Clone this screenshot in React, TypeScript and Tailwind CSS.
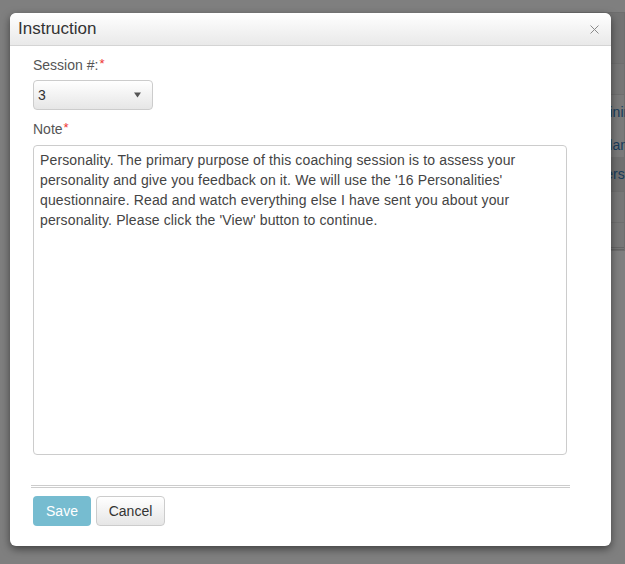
import React from 'react'

const noteText =
  "Personality. The primary purpose of this coaching session is to assess your\npersonality and give you feedback on it. We will use the '16 Personalities'\nquestionnaire. Read and watch everything else I have sent you about your\npersonality. Please click the 'View' button to continue."

function Required() {
  return <sup className="text-[#e33] text-[13px] relative -top-[2px] ml-[1px]">*</sup>
}

// page visible behind the modal backdrop (only the right edge shows)
function BackgroundPage() {
  return (
    <div className="absolute inset-0 bg-white">
      <div className="h-[12px]" />
      <div className="ml-[560px] border border-[#ddd]">
        <div className="h-[51px] bg-[#e6e6e6] border-b border-[#ddd]" />
        <div className="h-[31px] bg-[#ececec] border-b border-[#ddd]" />
        <div className="h-[34px] bg-[#f4f4f4] flex items-center text-[14px] text-[#337ab7]">
          <span className="ml-[28px] whitespace-nowrap">Training</span>
        </div>
        <div className="h-[28px] bg-[#f4f4f4] flex items-end pb-[2px] text-[14px] text-[#337ab7]">
          <span className="ml-[39px] whitespace-nowrap">Plan</span>
        </div>
        <div className="h-[35px] bg-[#e0e0e0] border-b border-[#ddd] flex items-center text-[14px] text-[#337ab7]">
          <span className="ml-[35px] whitespace-nowrap">Personality</span>
        </div>
        <div className="h-[31px] bg-[#eeeeee] border-b border-[#ddd]" />
        <div className="h-[27px] bg-[#eeeeee] border-b-[3px] border-double border-[#ccc]" />
      </div>
    </div>
  )
}

export default function App() {
  return (
    <div
      className="relative h-[564px] w-[625px] overflow-hidden text-[14px] leading-[20px]"
      style={{ fontFamily: '"Liberation Sans", Arial, sans-serif' }}
    >
      <BackgroundPage />
      <div className="absolute inset-0 bg-black/50" />

      {/* Modal */}
      <div className="absolute left-[10px] top-[13px] w-[601px] h-[533px] bg-white rounded-[6px] shadow-[0_3px_9px_rgba(0,0,0,0.5)] overflow-hidden">
        <div className="h-[33px] flex items-center justify-between pl-[8px] pr-[12px] border-b border-[#d4d4d4] bg-gradient-to-b from-white to-[#e9e9e9] rounded-t-[6px]">
          <h4 className="text-[17px] leading-[20px] text-[#333]">Instruction</h4>
          <button className="w-[10px] h-[10px] flex items-center justify-center text-[#8a8a8a]">
            <svg width="9" height="9" viewBox="0 0 9 9" fill="none" stroke="currentColor" strokeWidth="1">
              <path d="M0.5 0.5L8.5 8.5M8.5 0.5L0.5 8.5" />
            </svg>
          </button>
        </div>

        <div className="pl-[23px] pr-[44px]">
          <label className="block mt-[9px] text-[#555]">
            Session #:<Required />
          </label>
          <div className="mt-[5px] w-[120px] h-[30px] rounded-[4px] border border-[#ccc] bg-gradient-to-b from-white to-[#e6e6e6] flex items-center justify-between pl-[4px] pr-[11px] text-[#333]">
            <span>3</span>
            <svg width="7" height="6" viewBox="0 0 7 6" className="text-[#555]">
              <path d="M0 0.5h7L3.5 5.5z" fill="currentColor" />
            </svg>
          </div>

          <label className="block mt-[9px] text-[#555]">
            Note<Required />
          </label>
          <textarea
            readOnly
            defaultValue={noteText}
            className="mt-[6px] block w-[534px] h-[310px] resize-none rounded-[4px] border border-[#ccc] px-[6px] py-[4px] text-[14px] leading-[20px] tracking-[0.13px] text-[#444] outline-none"
            style={{ fontFamily: '"Liberation Sans", Arial, sans-serif' }}
          />
        </div>

        <div className="ml-[21px] w-[539px] mt-[30px] border-t-[3px] border-double border-[#ccc]" />

        <div className="flex gap-[5px] pl-[23px] mt-[8px]">
          <button className="w-[58px] h-[30px] rounded-[4px] bg-[#76bcd0] text-white">Save</button>
          <button className="w-[69px] h-[30px] rounded-[4px] border border-[#ccc] bg-gradient-to-b from-white to-[#e6e6e6] text-[#333]">
            Cancel
          </button>
        </div>
      </div>
    </div>
  )
}
